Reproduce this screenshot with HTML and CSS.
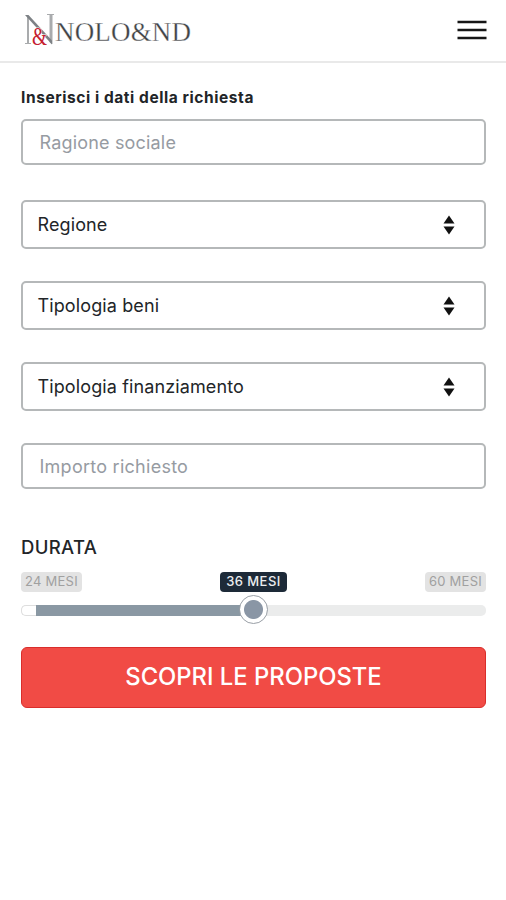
FILE: index.html
```html
<!DOCTYPE html>
<html lang="it">
<head>
<meta charset="utf-8">
<title>Nolo&amp;nd</title>
<link rel="stylesheet" href="styles.css">
</head>
<body>
<header class="header">
  <svg class="logo" width="170" height="36" viewBox="0 0 170 36">
    <path class="mark-light" d="M3 4h2v27H3zM1 31h6v1H1zM23 2h7v1h-7zM25.500 3h3v29h-1l-2-2z"/>
    <path class="mark-dark" d="M1 3h3.500L28 28.500v4z"/>
    <text class="mark-amp" x="8" y="32.500" textLength="15" lengthAdjust="spacingAndGlyphs">&amp;</text>
    <text class="wordmark" x="31" y="28.500" textLength="136">NOLO&amp;ND</text>
  </svg>
  <svg class="menu" width="30" height="20" viewBox="0 0 30 20">
    <path d="M.5 2h29M.5 10h29M.5 18h29"/>
  </svg>
</header>
<main class="form">
  <h1 class="title"><span>Inserisci i dati della richiesta</span></h1>
  <div class="field input company">Ragione sociale</div>
  <div class="field select"><span>Regione</span><svg class="arrows" viewBox="0 0 12 20"><path d="M6 .5l5.500 8H.5zM6 19.500L.5 11.500h11z"/></svg></div>
  <div class="field select"><span>Tipologia beni</span><svg class="arrows" viewBox="0 0 12 20"><path d="M6 .5l5.500 8H.5zM6 19.500L.5 11.500h11z"/></svg></div>
  <div class="field select"><span>Tipologia finanziamento</span><svg class="arrows" viewBox="0 0 12 20"><path d="M6 .5l5.500 8H.5zM6 19.500L.5 11.500h11z"/></svg></div>
  <div class="field input amount">Importo richiesto</div>
  <h2 class="label">DURATA</h2>
  <div class="range-labels">
    <span class="pill">24 MESI</span>
    <span class="pill current">36 MESI</span>
    <span class="pill">60 MESI</span>
  </div>
  <div class="track"><div class="start"></div><div class="filled"></div><div class="handle"></div></div>
  <div class="button">SCOPRI LE PROPOSTE</div>
</main>
</body>
</html>
```
FILE: styles.css
```css
* { box-sizing: border-box; }
body { margin: 0; background: #fff; color: #222528; font-family: Inter, "Liberation Sans", sans-serif; }
.header { height: 63px; padding: 12px 19px 0 24px; border-bottom: 2px solid #e9e9e9; display: flex; justify-content: space-between; align-items: flex-start; }
.logo { display: block; }
.mark-dark { fill: #7d8185; }
.mark-light { fill: #a9abad; }
.mark-amp { font: 25px "Liberation Serif", serif; fill: #c5202f; stroke: #fff; stroke-width: .8px; paint-order: stroke; }
.wordmark { font: 27px "Liberation Serif", serif; fill: #414346; stroke: #fff; stroke-width: .3px; }
.menu { margin-top: 8px; display: block; fill: none; stroke: #161616; stroke-width: 2.4; }
.form { padding: 0 20px 0 21px; display: flex; flex-direction: column; }
.title { margin: 25px 0 0; height: 20px; line-height: 20px; font-size: 15.500px; font-weight: 700; letter-spacing: .57px; }
.field { display: flex; align-items: center; border: 2px solid #b5b8b9; border-radius: 5px; font-size: 18px; letter-spacing: .12px; }
.input { height: 46px; padding: 0 16.500px; color: #969ba2; }
.company { margin-top: 11px; margin-bottom: 35px; letter-spacing: .18px; }
.select { height: 49px; padding: 0 29px 0 14.500px; justify-content: space-between; margin-bottom: 32px; }
.amount { letter-spacing: .26px; }
.arrows { width: 12px; height: 20px; fill: #111; }
.label { margin: 46px 0 0; height: 24px; line-height: 24px; font-size: 18.500px; font-weight: 500; letter-spacing: .35px; }
.range-labels { margin-top: 13px; display: flex; justify-content: space-between; }
.pill { height: 20px; line-height: 19px; padding: 0 4px; border-radius: 4px; background: #e3e3e3; color: #a0a0a0; font-size: 13px; letter-spacing: .25px; }
.current { background: #1d2a38; color: #eceef0; font-weight: 500; padding: 0 6px; letter-spacing: .45px; }
.track { position: relative; height: 11px; margin-top: 13px; border-radius: 5px; background: #ebecec; display: flex; }
.start { width: 15px; border: 1px solid #dedede; border-right: 0; border-radius: 5px 0 0 5px; background: #fff; }
.filled { width: 218px; background: #8a98a3; }
.handle { position: absolute; left: 50%; top: -10px; width: 29px; height: 29px; margin-left: -14.500px; border: 1.500px solid #999fa6; border-radius: 50%; background: radial-gradient(circle, #8a96a5 0 9px, #fff 10px); }
.button { height: 61px; margin-top: 31px; padding-bottom: 2px; border: 1px solid #d92e2b; border-radius: 6px; background: #f14b45; color: #fff; display: flex; align-items: center; justify-content: center; font-size: 23.800px; font-weight: 500; }
```
